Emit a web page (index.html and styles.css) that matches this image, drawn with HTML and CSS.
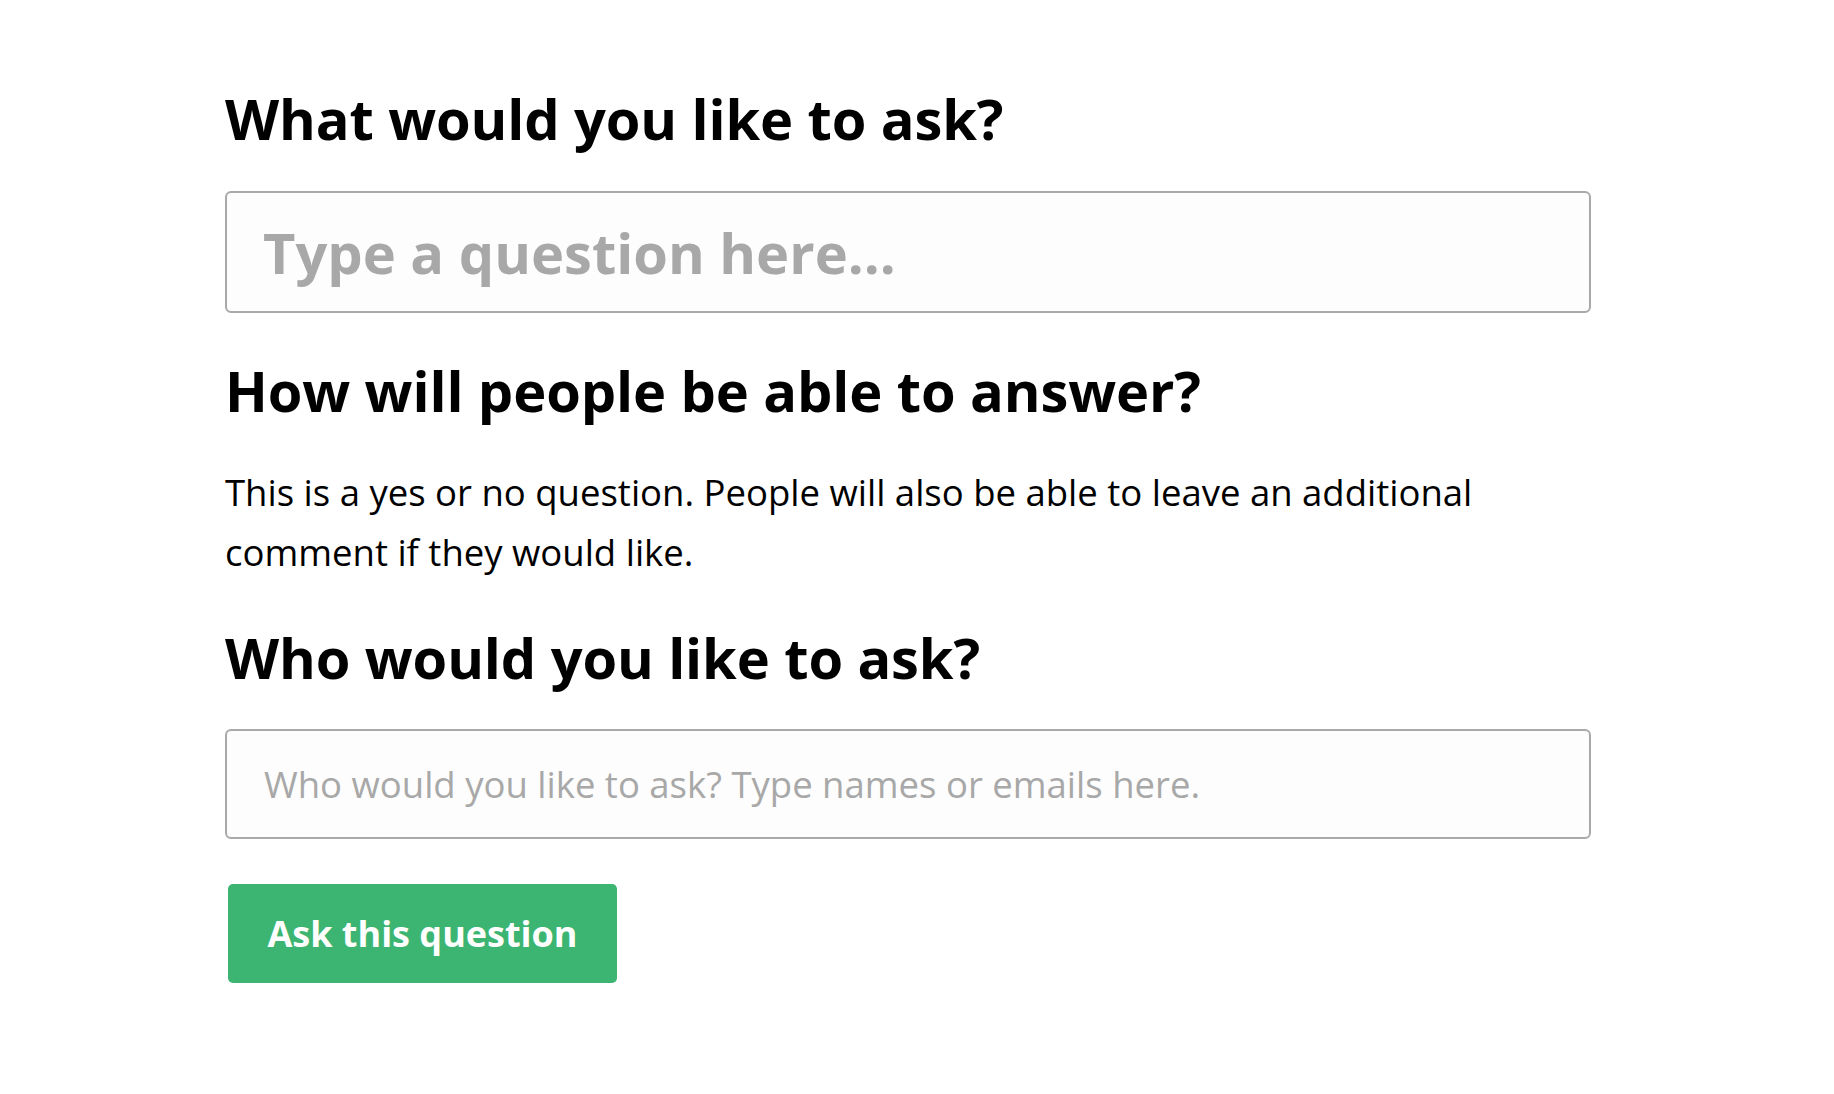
FILE: index.html
```html
<!DOCTYPE html>
<html>
<head>
<meta charset="utf-8">
<link rel="stylesheet" href="styles.css">
</head>
<body>
<main class="form">
  <h1 class="heading heading-first">What would you like to ask?</h1>
  <input class="field field-question" type="text" placeholder="Type a question here...">
  <h1 class="heading heading-answer">How will people be able to answer?</h1>
  <p class="note">This is a yes or no question. People will also be able to leave an additional comment if they would like.</p>
  <h1 class="heading heading-who">Who would you like to ask?</h1>
  <input class="field field-people" type="text" placeholder="Who would you like to ask? Type names or emails here.">
  <button class="ask-btn" type="button">Ask this question</button>
</main>
</body>
</html>
```

FILE: styles.css
```css
html, body {
  margin: 0;
  padding: 0;
  background: #ffffff;
}
body {
  font-family: "Open Sans", "Liberation Sans", sans-serif;
  color: #000;
}
.form {
  width: 1366px;
  padding: 0 0 0 225px;
  display: flex;
  flex-direction: column;
  align-items: flex-start;
}
.heading {
  font-size: 56px;
  font-weight: 700;
  line-height: 70px;
  margin: 0;
  letter-spacing: -0.1px;
}
.heading-first {
  margin-top: 83px;
}
.heading-answer {
  margin-top: 42px;
}
.heading-who {
  margin-top: 40px;
}
.field {
  box-sizing: border-box;
  width: 1366px;
  border: 2px solid #a9a9a9;
  border-radius: 6px;
  background: #fdfdfd;
  font-family: "Open Sans", "Liberation Sans", sans-serif;
  outline: none;
  margin: 0;
}
.field::placeholder {
  color: #a8a8a8;
  opacity: 1;
}
.field-question {
  height: 122px;
  margin-top: 38px;
  padding: 0 36px;
  font-size: 56px;
  font-weight: 700;
}
.field-people {
  height: 110px;
  margin-top: 37px;
  padding: 0 37px;
  font-size: 36.5px;
}
.note {
  font-size: 36.5px;
  line-height: 60px;
  margin: 37px 0 0;
  width: 1320px;
}
.ask-btn {
  margin-top: 45px;
  margin-left: 3px;
  width: 389px;
  height: 99px;
  border: none;
  border-radius: 5px;
  background: #3db572;
  color: #fff;
  font-family: "Open Sans", "Liberation Sans", sans-serif;
  font-weight: 700;
  font-size: 36px;
  padding: 0;
}
```
